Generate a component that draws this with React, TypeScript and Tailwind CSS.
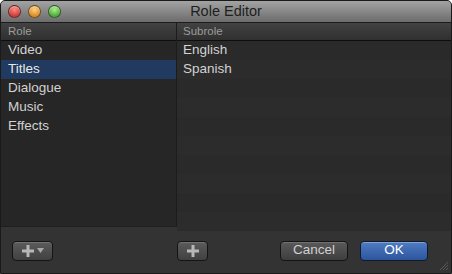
import React from 'react';

const roles = ['Video', 'Titles', 'Dialogue', 'Music', 'Effects'];
const subroles = ['English', 'Spanish'];

const Light = ({ from, to }: { from: string; to: string }) => (
  <div
    className="h-[13px] w-[13px] rounded-full border border-black/50 shadow-[inset_0_1px_2px_rgba(255,255,255,0.6)]"
    style={{ background: `radial-gradient(circle at 50% 35%, ${from}, ${to})` }}
  />
);

const Plus = () => (
  <svg width="12" height="12" viewBox="0 0 12 12">
    <rect x="4.5" y="0" width="3" height="12" fill="#b8b8b8" />
    <rect x="0" y="4.5" width="12" height="3" fill="#b8b8b8" />
  </svg>
);

export default function App() {
  return (
    <div className="flex h-[274px] w-[452px] flex-col overflow-hidden rounded-t-[5px] bg-[#333333] font-['Lucida_Grande','Liberation_Sans',sans-serif] border border-[#1a1a1a]">
      {/* Title bar */}
      <div className="relative flex h-[22px] shrink-0 items-center bg-gradient-to-b from-[#a3a3a3] to-[#6d6d6d] border-b border-[#1c1c1c]">
        <div className="flex items-center gap-[7px] pl-[7px]">
          <Light from="#ff8a80" to="#b3161a" />
          <Light from="#ffd27a" to="#c96a00" />
          <Light from="#a6f08a" to="#238a14" />
        </div>
        <div className="absolute inset-0 flex items-center justify-center text-[14.5px] text-[#1e1e1e]">Role Editor</div>
      </div>

      {/* Columns */}
      <div className="flex h-[204px] shrink-0 border-b border-[#1f1f1f]">
        <div className="flex w-[176px] flex-col bg-[#262626] border-r border-[#1c1c1c]">
          <div className="flex h-[18px] items-center bg-gradient-to-b from-[#424242] to-[#303030] border-b border-[#0e0e0e] pl-[7px] text-[11.5px] text-[#9c9c9c]">Role</div>
          {roles.map(r => (
            <div
              key={r}
              className={`flex h-[19px] items-center pl-[7px] text-[13.5px] ${r === 'Titles' ? 'bg-[#213a5f] text-[#e8e8e8]' : 'text-[#d2d2d2]'}`}
            >
              {r}
            </div>
          ))}
        </div>
        <div className="flex flex-1 flex-col bg-[#2a2a2a]">
          <div className="flex h-[18px] items-center bg-gradient-to-b from-[#424242] to-[#303030] border-b border-[#0e0e0e] pl-[6px] text-[11.5px] text-[#9c9c9c]">Subrole</div>
          {[0, 1, 2, 3, 4, 5, 6, 7, 8, 9].map(i => (
            <div
              key={i}
              className={`flex h-[19px] shrink-0 items-center pl-[6px] text-[13.5px] text-[#d2d2d2] ${i % 2 === 0 ? 'bg-[#2a2a2a]' : 'bg-[#2c2c2d]'}`}
            >
              {subroles[i] ?? ''}
            </div>
          ))}
        </div>
      </div>

      {/* Bottom bar */}
      <div className="relative flex flex-1 items-center pt-[1px]">
        <div className="ml-[11px] flex h-[20px] w-[41px] items-center justify-center gap-[3px] rounded-[4px] border border-[#141414] bg-gradient-to-b from-[#5c5c5c] to-[#404040] shadow-[inset_0_1px_0_rgba(255,255,255,0.15)]">
          <Plus />
          <svg width="7" height="5" viewBox="0 0 7 5"><path d="M0 0H7L3.5 5Z" fill="#a8a8a8" /></svg>
        </div>
        <div className="ml-[124px] flex h-[20px] w-[31px] items-center justify-center rounded-[4px] border border-[#141414] bg-gradient-to-b from-[#5c5c5c] to-[#404040] shadow-[inset_0_1px_0_rgba(255,255,255,0.15)]">
          <Plus />
        </div>
        <div className="ml-[72px] flex h-[20px] w-[68px] items-center justify-center rounded-[4px] border border-[#141414] bg-gradient-to-b from-[#5a5a5a] to-[#3e3e3e] text-[13.5px] text-[#d0d0d0] shadow-[inset_0_1px_0_rgba(255,255,255,0.15)]">
          Cancel
        </div>
        <div className="ml-[12px] flex h-[20px] w-[68px] items-center justify-center rounded-[4px] border border-[#0f1a2c] bg-gradient-to-b from-[#4f7cc4] to-[#2c559c] text-[13.5px] text-white shadow-[inset_0_1px_0_rgba(255,255,255,0.3)]">
          OK
        </div>
        <svg className="absolute bottom-[2px] right-[2px]" width="10" height="10" viewBox="0 0 10 10">
          <path d="M9 1L1 9M9 4L4 9M9 7L7 9" stroke="#5a5a5a" strokeWidth="1" />
        </svg>
      </div>
    </div>
  );
}
